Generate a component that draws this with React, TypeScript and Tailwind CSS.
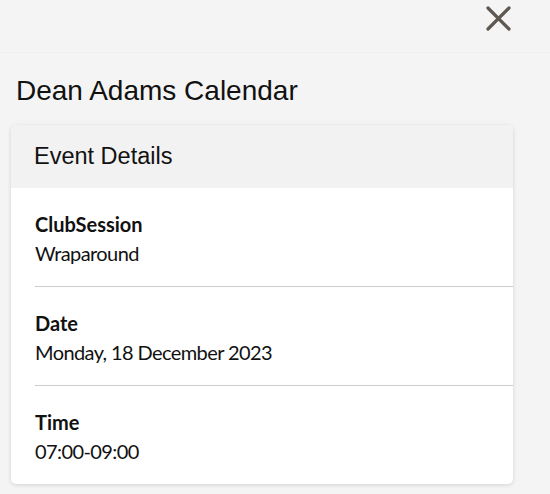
type Detail = {
  label: string;
  value: string;
};

const details: Detail[] = [
  { label: 'ClubSession', value: 'Wraparound' },
  { label: 'Date', value: 'Monday, 18 December 2023' },
  { label: 'Time', value: '07:00-09:00' },
];

export default function App() {
  return (
    <div className="min-h-[494px] bg-[#f4f4f4] font-['Liberation_Sans',Arial,sans-serif] text-[#111]">
      <div className="flex h-[53px] items-start justify-end border-b border-[#efefef] bg-[#f4f4f4] pr-[39px] pt-[6px]">
        {/* close */}
        <svg width="25" height="25" viewBox="0 0 25 25" className="text-[#5f5852]">
          <path d="M2 2 L23 23 M23 2 L2 23" stroke="currentColor" strokeWidth="3.2" strokeLinecap="round" fill="none" />
        </svg>
      </div>

      <h1 className="pl-4 pt-[21px] text-[28px] leading-[34px]">Dean Adams Calendar</h1>

      <div className="ml-[11px] mt-[17px] w-[502px] overflow-hidden rounded-[5px] bg-white shadow-[0_1px_4px_rgba(0,0,0,0.14)]">
        <div className="flex h-[63px] items-center bg-[#f2f2f2] pl-[23px] text-[23.5px]">Event Details</div>
        <div className="pl-[24px] font-['Lato','Noto_Sans',sans-serif]">
          {details.map((item, i) => (
            <div key={item.label} className={i > 0 ? 'border-t border-[#cccccc]' : ''}>
              <div className="flex h-[98px] flex-col justify-center pt-[3px] text-[20px] leading-[29px]">
                <div className="font-bold">{item.label}</div>
                <div className="tracking-[-0.6px]">{item.value}</div>
              </div>
            </div>
          ))}
        </div>
      </div>
    </div>
  );
}
